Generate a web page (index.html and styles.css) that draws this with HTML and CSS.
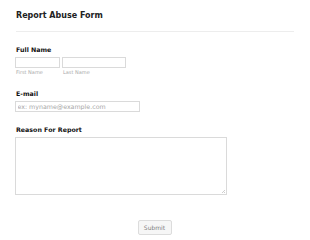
FILE: index.html
```html
<!DOCTYPE html>
<html lang="en">
<head>
    <meta charset="UTF-8">
    <title>Report Abuse Form</title>
    <link rel="stylesheet" href="styles.css">
</head>
<body>
    <div class="form">
        <div class="form-header">
            <h2>Report Abuse Form</h2>
        </div>

        <div class="field field-name">
            <label class="field-label">Full Name</label>
            <div class="name-row">
                <div class="name-part">
                    <input type="text" class="input first">
                    <span class="sublabel">First Name</span>
                </div>
                <div class="name-part">
                    <input type="text" class="input last">
                    <span class="sublabel">Last Name</span>
                </div>
            </div>
        </div>

        <div class="field field-email">
            <label class="field-label">E-mail</label>
            <input type="text" class="input email" placeholder="ex: myname@example.com">
        </div>

        <div class="field field-reason">
            <label class="field-label">Reason For Report</label>
            <textarea class="input reason"></textarea>
        </div>

        <div class="actions">
            <button type="submit">Submit</button>
        </div>
    </div>
</body>
</html>
```

FILE: styles.css
```css
body {
    margin: 0;
    background: #fff;
    font-family: "DejaVu Sans", Verdana, sans-serif;
    color: #111;
}
.form {
    padding: 0 16px 0 15px;
}
.form-header {
    margin-left: 1px;
    padding: 11.4px 0 0;
    height: 19.6px;
    border-bottom: 1px solid #ededed;
}
h2 {
    margin: 0;
    font-size: 8px;
    line-height: 10px;
    font-weight: bold;
    color: #222;
}
.field-name {
    margin-top: 12.7px;
}
.field-email {
    margin-top: 14px;
}
.field-reason {
    margin-top: 13px;
}
.field-label {
    display: block;
    padding-left: 1px;
    font-size: 6.3px;
    font-weight: bold;
    line-height: 9px;
    margin-bottom: 3px;
}
.name-row {
    display: flex;
    gap: 2px;
}
.name-part {
    display: flex;
    flex-direction: column;
}
.input {
    display: block;
    box-sizing: border-box;
    margin: 0;
    border: 1px solid #dadada;
    background: #fff;
    font-family: "DejaVu Sans", Verdana, sans-serif;
    padding: 0 1.5px;
}
input.input {
    height: 11px;
    font-size: 6.3px;
}
.input::placeholder {
    color: #a8a8a8;
}
.first {
    width: 45px;
}
.last {
    width: 64px;
}
.sublabel {
    font-size: 5px;
    line-height: 6px;
    color: #aaa;
    margin-top: 1.7px;
    padding-left: 1px;
}
.email {
    width: 125px;
}
.reason {
    width: 212px;
    height: 57.3px;
    resize: none;
    /* faint resize grip in the corner */
    background:
        linear-gradient(135deg, transparent 55%, #cfcfcf 55%, #cfcfcf 65%, transparent 65%, transparent 78%, #cfcfcf 78%, #cfcfcf 88%, transparent 88%) no-repeat right 1px bottom 1px / 4px 4px,
        #fff;
}
.actions {
    text-align: center;
    margin-top: 20.4px;
}
button {
    height: 14.3px;
    width: 34px;
    padding: 0;
    font-family: "DejaVu Sans", Verdana, sans-serif;
    font-size: 6px;
    color: #808080;
    background: #f6f6f6;
    border: 1px solid #dcdcdc;
    border-radius: 2px;
}
```
